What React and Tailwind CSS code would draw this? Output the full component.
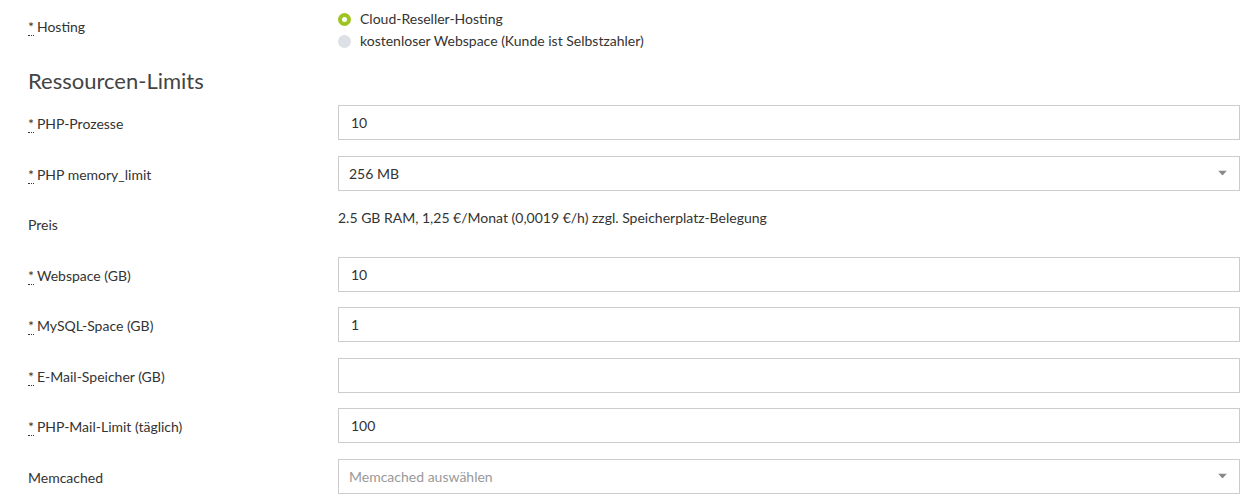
import React from "react";

function Req() {
  return (
    <abbr title="Pflichtfeld" className="no-underline border-b border-dotted border-[#333] leading-none mr-[3px]">*</abbr>
  );
}

function Caret() {
  return (
    <svg width="9" height="5" viewBox="0 0 9 5" className="absolute right-[12px] top-1/2 -translate-y-1/2">
      <path d="M0 0 L9 0 L4.5 5 Z" fill="#888" />
    </svg>
  );
}

function Label({ req, children }) {
  return (
    <div className="flex items-center h-[35px] pt-[2px] text-[14px] text-[#333]">
      <span>
        {req && <Req />}
        {children}
      </span>
    </div>
  );
}

function Input({ value }) {
  return (
    <div className="h-[35px] border border-[#ccc] bg-white flex items-center px-[12px] text-[14px] text-[#333]">
      {value}
    </div>
  );
}

function Select({ value, placeholder }) {
  return (
    <div className="relative h-[35px] border border-[#ccc] bg-white flex items-center px-[10px] text-[14px]">
      {value ? <span className="text-[#333]">{value}</span> : <span className="text-[#999]">{placeholder}</span>}
      <Caret />
    </div>
  );
}

export default function App() {
  return (
    <div className="w-[1255px] h-[503px] bg-white overflow-hidden pl-[28px] pr-[15px] pt-[8px]" style={{ fontFamily: "Lato, 'Open Sans', sans-serif" }}>
      <div className="grid grid-cols-[310px_1fr]">
        <div className="pt-[8px] text-[14px] text-[#333] leading-[22px]">
          <Req />Hosting
        </div>
        <div className="text-[14px] text-[#333] leading-[22px]">
          <div className="flex items-center">
            <span className="w-[13px] h-[13px] rounded-full bg-[#9ec41f] flex items-center justify-center mr-[9px]">
              <span className="w-[5px] h-[5px] rounded-full bg-white" />
            </span>
            Cloud-Reseller-Hosting
          </div>
          <div className="flex items-center">
            <span className="w-[13px] h-[13px] rounded-full bg-[#dde0e4] mr-[9px]" />
            kostenloser Webspace (Kunde ist Selbstzahler)
          </div>
        </div>
      </div>
      <h3 className="text-[22px] text-[#444] leading-[26px] mt-[16px] mb-[11px]">Ressourcen-Limits</h3>
      <div className="grid grid-cols-[310px_1fr] gap-y-[15.5px]">
        <Label req>PHP-Prozesse</Label>
        <Input value="10" />
        <Label req>PHP memory_limit</Label>
        <Select value="256 MB" />
        <Label>Preis</Label>
        <div className="h-[35px] text-[14px] text-[#333] pt-[2px] leading-[20px]">
          2.5 GB RAM, 1,25 €/Monat (0,0019 €/h) zzgl. Speicherplatz-Belegung
        </div>
        <Label req>Webspace (GB)</Label>
        <Input value="10" />
        <Label req>MySQL-Space (GB)</Label>
        <Input value="1" />
        <Label req>E-Mail-Speicher (GB)</Label>
        <Input value="" />
        <Label req>PHP-Mail-Limit (täglich)</Label>
        <Input value="100" />
        <Label>Memcached</Label>
        <Select placeholder="Memcached auswählen" />
      </div>
    </div>
  );
}
